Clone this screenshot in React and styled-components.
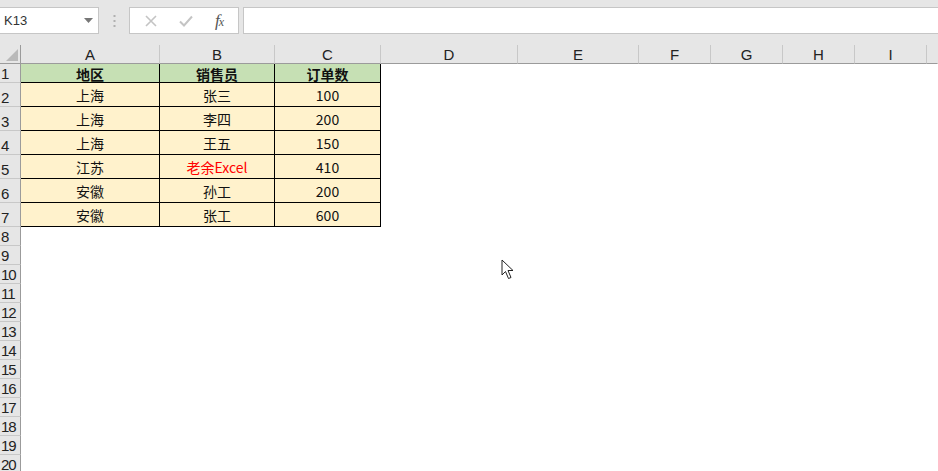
import React from "react";
import styled, { createGlobalStyle } from "styled-components";

const GlobalStyle = createGlobalStyle`
  html, body {
    margin: 0;
    padding: 0;
    background: #ffffff;
    overflow: hidden;
  }
  * { box-sizing: border-box; }
`;

const Page = styled.div`
  position: relative;
  width: 938px;
  height: 471px;
  overflow: hidden;
  background: #fff;
  font-family: "Noto Sans CJK SC", "Liberation Sans", sans-serif;
`;

const Toolbar = styled.div`
  height: 45px;
  background: #e6e6e6;
  padding-top: 7px;
  display: flex;
  align-items: flex-start;
`;

const NameBox = styled.div`
  width: 99px;
  height: 27px;
  background: #fff;
  border: 1px solid #c6c6c6;
  border-left: none;
  display: flex;
  align-items: center;
  justify-content: space-between;
  padding: 0 5px 0 4px;
  font-family: "Liberation Sans", sans-serif;
  font-size: 13px;
  color: #333;
`;

const Grip = styled.div`
  width: 30px;
  height: 27px;
  display: flex;
  align-items: center;
  justify-content: center;
`;

const FuncBox = styled.div`
  width: 110px;
  height: 27px;
  background: #fff;
  border: 1px solid #c6c6c6;
  display: flex;
  align-items: center;
  justify-content: space-around;
  padding: 0 4px;
`;

const Fx = styled.span`
  font-family: "Liberation Serif", serif;
  font-style: italic;
  font-size: 17px;
  color: #555;
  letter-spacing: -1px;
  sub {
    font-size: 12px;
    vertical-align: 0px;
  }
`;

const FormulaInput = styled.div`
  flex: 1;
  height: 27px;
  margin-left: 4px;
  background: #fff;
  border: 1px solid #c6c6c6;
  border-right: none;
`;

const Sheet = styled.div`
  display: grid;
  grid-template-columns: 21px 139px 115px 106px 137px 121px 72px 72px 72px 72px 1fr;
  grid-template-rows: 19px 19px repeat(6, 24px) repeat(14, 19px);
`;

const Corner = styled.div`
  background: #e6e6e6;
  border-right: 1px solid #9b9b9b;
  border-bottom: 1px solid #9b9b9b;
  position: relative;
  &::after {
    content: "";
    position: absolute;
    right: 2px;
    bottom: 2px;
    border-style: solid;
    border-width: 0 0 12px 12px;
    border-color: transparent transparent #b9b9b9 transparent;
  }
`;

const ColHead = styled.div`
  background: #e6e6e6;
  border-right: 1px solid ${({ last }) => (last ? "transparent" : "#c8c8c8")};
  border-bottom: 1px solid #9b9b9b;
  display: flex;
  align-items: flex-end;
  justify-content: center;
  padding-bottom: 0;
  font-family: "Liberation Sans", sans-serif;
  font-size: 15px;
  line-height: 17px;
  color: #222;
`;

const RowHead = styled.div`
  background: #e6e6e6;
  border-right: 1px solid #9b9b9b;
  border-bottom: 1px solid #c8c8c8;
  display: flex;
  align-items: flex-end;
  padding: 0 0 0 1px;
  font-family: "Liberation Sans", sans-serif;
  font-size: 15px;
  line-height: 17px;
  letter-spacing: -1px;
  color: #222;
  overflow: hidden;
`;

const Cell = styled.div`
  background: ${({ head }) => (head ? "#c6e0b4" : "#fff2cc")};
  border-right: 1px solid #000;
  border-bottom: 1px solid #000;
  display: flex;
  align-items: center;
  justify-content: center;
  font-size: 14px;
  line-height: 18px;
  font-weight: ${({ head }) => (head ? 700 : 400)};
  color: ${({ red }) => (red ? "#ff0000" : "#111")};
  padding-top: 1px;
`;

const Empty = styled.div`
  background: #fff;
`;

const Cursor = styled.svg`
  position: absolute;
  left: 501px;
  top: 259px;
`;

const columns = ["A", "B", "C", "D", "E", "F", "G", "H", "I", ""];

const data = [
  { cells: ["地区", "销售员", "订单数"], head: true },
  { cells: ["上海", "张三", "100"] },
  { cells: ["上海", "李四", "200"] },
  { cells: ["上海", "王五", "150"] },
  { cells: ["江苏", "老余Excel", "410"], red: 1 },
  { cells: ["安徽", "孙工", "200"] },
  { cells: ["安徽", "张工", "600"] },
];

const App = () => {
  const totalRows = 20;
  const rows = [];

  for (let r = 1; r <= totalRows; r++) {
    const row = data[r - 1];
    rows.push(<RowHead key={"h" + r}>{r}</RowHead>);
    for (let c = 0; c < columns.length; c++) {
      if (row && c < 3) {
        rows.push(
          <Cell key={r + "-" + c} head={row.head} red={row.red === c}>
            {row.cells[c]}
          </Cell>
        );
      } else {
        rows.push(<Empty key={r + "-" + c} />);
      }
    }
  }

  return (
    <Page>
      <GlobalStyle />
      <Toolbar>
        <NameBox>
          <span>K13</span>
          <svg width="9" height="5" viewBox="0 0 9 5">
            <path d="M0 0 L9 0 L4.5 5 Z" fill="#777" />
          </svg>
        </NameBox>
        <Grip>
          <svg width="3" height="12" viewBox="0 0 3 12">
            <rect x="0.5" y="0" width="2" height="2" fill="#b0b0b0" />
            <rect x="0.5" y="5" width="2" height="2" fill="#b0b0b0" />
            <rect x="0.5" y="10" width="2" height="2" fill="#b0b0b0" />
          </svg>
        </Grip>
        <FuncBox>
          <svg width="12" height="12" viewBox="0 0 12 12">
            <path d="M1 1 L11 11 M11 1 L1 11" stroke="#c4c4c4" strokeWidth="1.6" />
          </svg>
          <svg width="14" height="12" viewBox="0 0 14 12">
            <path d="M1 6.5 L5 10.5 L13 1.5" stroke="#c4c4c4" strokeWidth="2" fill="none" />
          </svg>
          <Fx>
            f<sub>x</sub>
          </Fx>
        </FuncBox>
        <FormulaInput />
      </Toolbar>
      <Sheet>
        <Corner />
        {columns.map((c, i) => (
          <ColHead key={i} last={i === columns.length - 1}>
            {c}
          </ColHead>
        ))}
        {rows}
      </Sheet>
      <Cursor width="14" height="21" viewBox="0 0 14 21">
        <path
          d="M1 1 L1 16 L4.5 12.5 L7.5 19.5 L10 18.5 L7 11.5 L12 11.5 Z"
          fill="#fff"
          stroke="#222"
          strokeWidth="1"
          strokeLinejoin="miter"
        />
      </Cursor>
    </Page>
  );
};

export default App;
